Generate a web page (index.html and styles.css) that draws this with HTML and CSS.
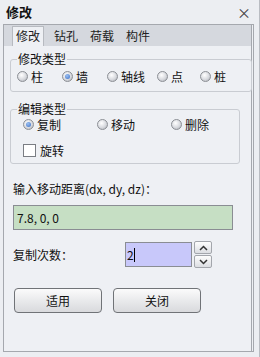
FILE: index.html
```html
<!DOCTYPE html>
<html lang="zh">
<head>
    <meta charset="UTF-8">
    <title>修改</title>
    <link rel="stylesheet" href="styles.css">
</head>
<body>
    <div class="window">
        <div class="titlebar">
            <span class="title">修改</span>
            <span class="close">×</span>
        </div>
        <div class="panel">
            <div class="tabs">
                <span class="tab active">修改</span>
                <span class="tab">钻孔</span>
                <span class="tab">荷载</span>
                <span class="tab">构件</span>
            </div>
            <div class="content">
                <fieldset class="group group-type">
                    <legend>修改类型</legend>
                    <div class="row">
                        <label class="opt"><span class="radio"></span>柱</label>
                        <label class="opt"><span class="radio on"></span>墙</label>
                        <label class="opt"><span class="radio"></span>轴线</label>
                        <label class="opt"><span class="radio"></span>点</label>
                        <label class="opt"><span class="radio"></span>桩</label>
                    </div>
                </fieldset>
                <fieldset class="group group-edit">
                    <legend>编辑类型</legend>
                    <div class="edit-row">
                        <label class="opt"><span class="radio on"></span>复制</label>
                        <label class="opt"><span class="radio"></span>移动</label>
                        <label class="opt"><span class="radio"></span>删除</label>
                    </div>
                    <label class="opt check-row"><span class="check"></span>旋转</label>
                </fieldset>

                <div class="field-label">输入移动距离(dx, dy, dz)：</div>
                <div class="input green">7.8, 0, 0</div>

                <div class="count-row">
                    <span class="count-label">复制次数：</span>
                    <div class="input purple">2<span class="caret"></span></div>
                    <div class="spin">
                        <span class="spin-btn">
                            <svg width="9" height="6" viewBox="0 0 9 6"><path d="M1 5 L4.5 1.5 L8 5" fill="none" stroke="#333" stroke-width="1.5"/></svg>
                        </span>
                        <span class="spin-btn">
                            <svg width="9" height="6" viewBox="0 0 9 6"><path d="M1 1 L4.5 4.5 L8 1" fill="none" stroke="#333" stroke-width="1.5"/></svg>
                        </span>
                    </div>
                </div>

                <div class="buttons">
                    <button class="btn">适用</button>
                    <button class="btn">关闭</button>
                </div>
            </div>
        </div>
    </div>
</body>
</html>
```

FILE: styles.css
```css
body {
    margin: 0;
    background-color: #eceef2;
    font-family: "Noto Sans CJK SC", "DejaVu Sans", sans-serif;
    font-size: 12px;
    color: #111;
}
.window {
    width: 260px;
    height: 357px;
    box-sizing: border-box;
    display: flex;
    flex-direction: column;
    background-color: #eceef2;
    border-right: 1px solid #b9bcc2;
}
.titlebar {
    height: 23px;
    display: flex;
    align-items: center;
    justify-content: space-between;
    padding: 0 8px 0 6px;
    box-sizing: border-box;
}
.title {
    font-weight: bold;
    font-size: 13px;
}
.close {
    font-size: 14px;
    color: #444;
}
.panel {
    margin: 1px 5px 5px 3px;
    flex: 1;
    border: 1px solid #a5a8ae;
    border-right: 3px double #a5a8ae;
    display: flex;
    flex-direction: column;
    background-color: #eef0f4;
}
.tabs {
    height: 21px;
    background-color: #d5d8de;
    display: flex;
    align-items: flex-end;
    padding-left: 8px;
}
.tab {
    padding: 0 6px;
    height: 19px;
    line-height: 18px;
    font-size: 12px;
    color: #222;
}
.tab.active {
    background-color: #eef0f4;
    border: 1px solid #b7bac0;
    border-bottom: none;
    padding: 0 3px;
    margin-right: 4px;
}
.content {
    padding: 6px 11px 0 6px;
    display: flex;
    flex-direction: column;
}
.group {
    margin: 0;
    border: 1px solid #c9ccd2;
    border-radius: 3px;
    padding: 0 6px;
}
.group legend {
    padding: 0 1px;
    font-size: 12px;
    line-height: 14px;
}
.group-type {
    height: 40px;
    box-sizing: border-box;
}
.group-edit {
    margin-top: 10px;
    height: 62px;
    box-sizing: border-box;
}
.row {
    display: flex;
    align-items: center;
    margin-top: 2px;
}
.group-type .opt {
    flex: 0 0 45px;
}
.group-type .opt:nth-child(3) {
    flex-basis: 50px;
}
.group-type .opt:nth-child(4) {
    flex-basis: 43px;
}
.edit-row {
    display: grid;
    grid-template-columns: 74px 74px 60px;
    align-items: center;
    margin-left: 6px;
}
.opt {
    display: flex;
    align-items: center;
    gap: 3px;
    font-size: 12px;
}
.radio {
    flex: none;
    width: 11px;
    height: 11px;
    border-radius: 50%;
    border: 1px solid #8c8f95;
    background: radial-gradient(circle at 40% 35%, #ffffff 0%, #d8dadf 55%, #a9acb2 100%);
    box-sizing: border-box;
    position: relative;
}
.radio.on::after {
    content: "";
    position: absolute;
    left: 2px;
    top: 2px;
    width: 5px;
    height: 5px;
    border-radius: 50%;
    background: radial-gradient(circle at 40% 35%, #9cc0f0 0%, #3a6fc8 100%);
}
.check-row {
    margin: 9px 0 0 6px;
}
.check {
    width: 11px;
    height: 11px;
    border: 1px solid #7a7d83;
    background-color: #ffffff;
    margin-right: 1px;
}
.field-label {
    margin: 16px 0 0 3px;
    font-size: 12px;
}
.input {
    box-sizing: border-box;
    height: 25px;
    border: 1px solid #8a8d93;
    padding: 0 3px;
    display: flex;
    align-items: center;
    font-size: 12px;
}
.green {
    margin: 8px 0 0 3px;
    width: 220px;
    background-color: #c6dfc4;
}
.count-row {
    margin-top: 11px;
    display: flex;
    align-items: center;
}
.count-label {
    margin-left: 3px;
    width: 112px;
}
.purple {
    width: 67px;
    background-color: #c8c8fa;
    padding-left: 1px;
}
.caret {
    width: 1px;
    height: 14px;
    background-color: #000;
}
.spin {
    display: flex;
    flex-direction: column;
    gap: 1px;
    margin-left: 2px;
}
.spin-btn {
    width: 16px;
    height: 11px;
    border: 1px solid #a3a6ac;
    border-radius: 2px;
    background: linear-gradient(#fdfdfd, #dcdee2);
    display: flex;
    align-items: center;
    justify-content: center;
}
.buttons {
    margin: 20px 0 0 4px;
    display: flex;
    gap: 11px;
}
.btn {
    width: 88px;
    height: 25px;
    border: 1px solid #707377;
    border-radius: 4px;
    background: linear-gradient(#fbfbfb, #e9eaec 50%, #d9dadd);
    font-family: "Noto Sans CJK SC", sans-serif;
    font-size: 12px;
    color: #111;
    padding: 0;
}
```
